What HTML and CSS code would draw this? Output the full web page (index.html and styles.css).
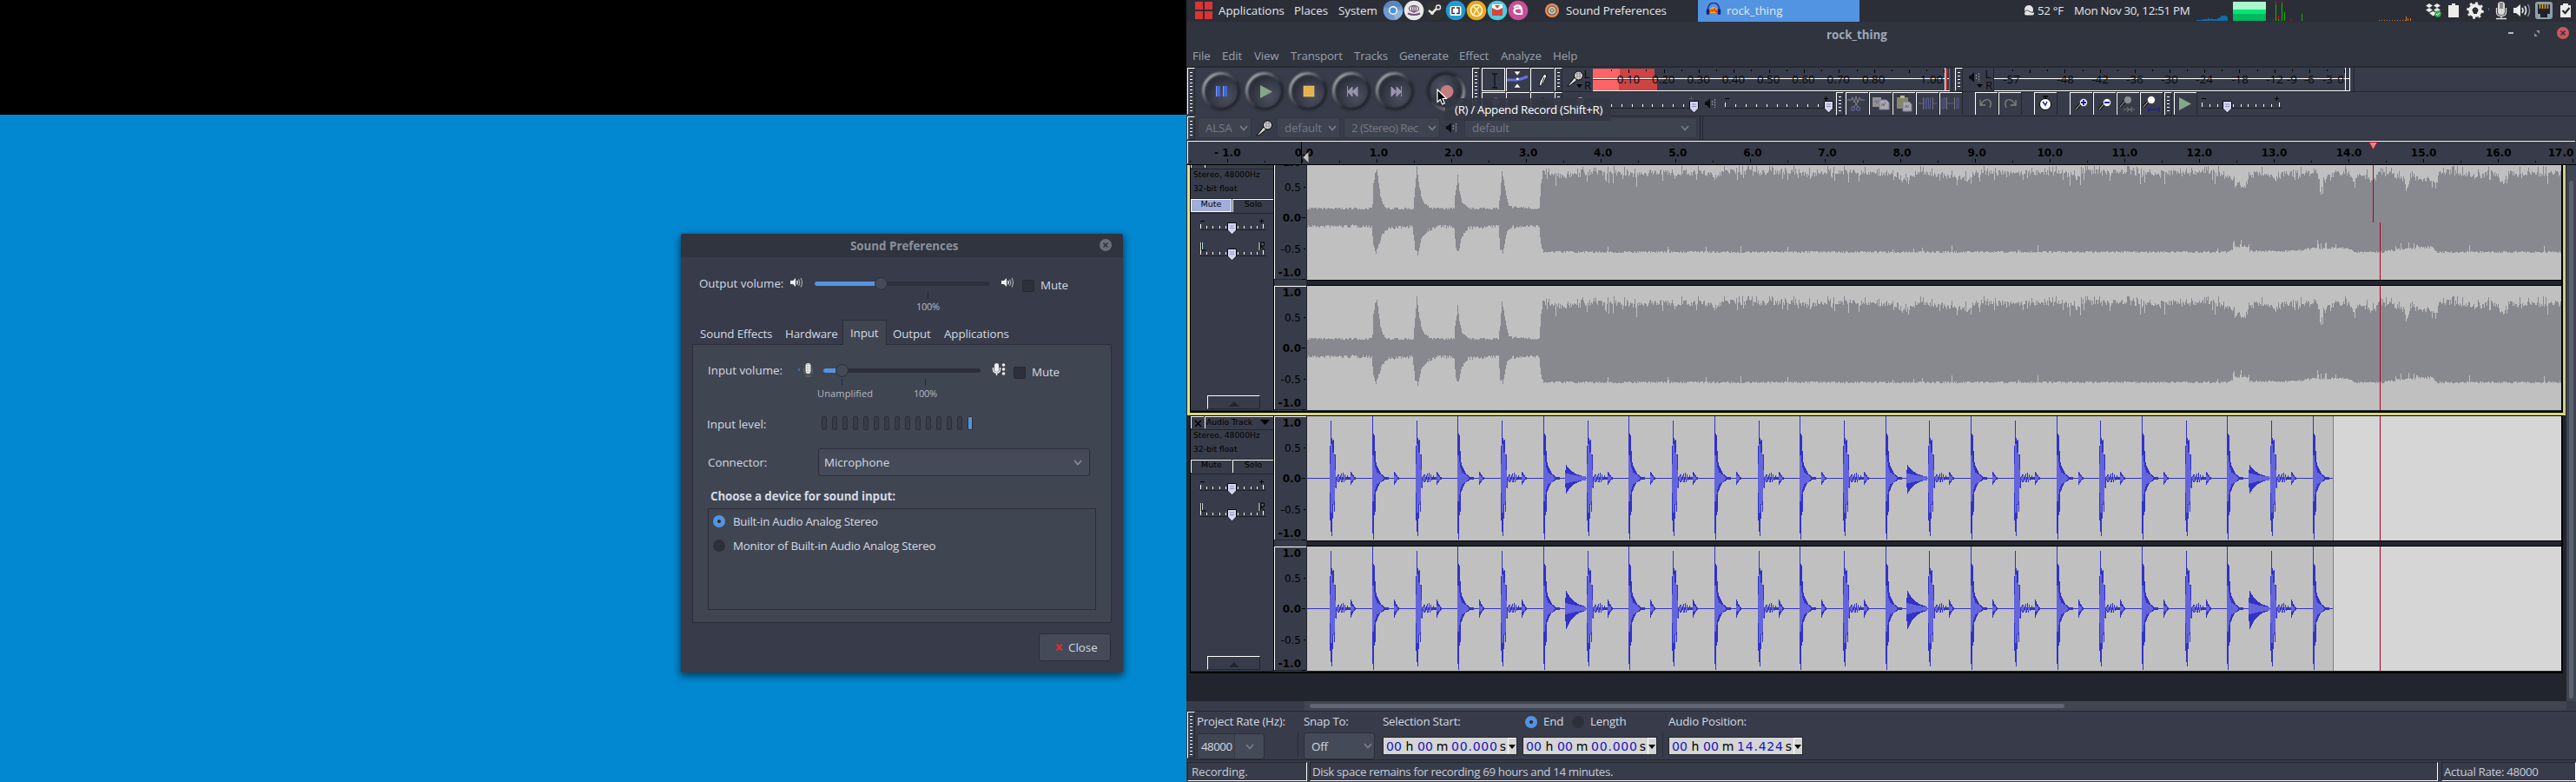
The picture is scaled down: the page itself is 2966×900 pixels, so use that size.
FILE: index.html
```html
<!DOCTYPE html>
<html lang="en">
<head>
<meta charset="utf-8">
<title>rock_thing</title>
<link rel="stylesheet" href="styles.css">
</head>
<body>
<div class="screens">
<section class="desktop">
  <div class="dead-area"></div>
  <div class="dialog">
    <header class="dialog-title"><span>Sound Preferences</span>
      <svg class="dialog-x" width="14" height="14" viewBox="0 0 14 14"><circle cx="7" cy="7" r="7" fill="#6b6f7a"/><path d="M4.5 4.5l5 5m0-5l-5 5" stroke="#2f343f" stroke-width="1.7"/></svg>
    </header>
    <div class="vol-row">
      <span class="vol-label out">Output volume:</span>
      <svg width="25" height="72" viewBox="905 296 25 72"><use href="#spk" x="910" y="319"/></svg>
      <svg width="217" height="72" viewBox="930 296 217 72">
        <rect x="938" y="324" width="201" height="5" rx="2.5" fill="#2d303b"/><rect x="938" y="324" width="76" height="5" rx="2.5" fill="#5294e2"/>
        <circle cx="1014.5" cy="326.500" r="7" fill="#444a58" stroke="#2b2e39"/><path d="M1068.500 336v8" stroke="#262934"/>
        <text class="mark" x="1055" y="357" textLength="27">100%</text></svg>
      <svg width="26" height="72" viewBox="1147 296 26 72"><use href="#spk" x="1153" y="319"/></svg>
      <i class="check"></i><span class="mute">Mute</span>
    </div>
    <nav class="tabs"><span class="t1">Sound Effects</span><span class="t2">Hardware</span><span class="t3">Input</span><span class="t4">Output</span><span class="t5">Applications</span></nav>
    <div class="page">
      <div class="vol-row in">
        <span class="vol-label inp">Input volume:</span>
        <svg width="33" height="64" viewBox="905 397 33 64"><path d="M920 424v3" stroke="#5294e2"/><rect x="927.500" y="418" width="6" height="12" rx="3" fill="#eee"/><path d="M929.500 419v10M931.500 419v10" stroke="#999" stroke-dasharray="1 1"/><path d="M925.500 424v3q0 4 5 4t5-4v-3M930.500 431v2M927 433h7" stroke="#5e605f" fill="none" stroke-width="1.300"/></svg>
        <svg width="200" height="64" viewBox="938 397 200 64">
          <rect x="948" y="424" width="181" height="5" rx="2.5" fill="#2d303b"/><rect x="948" y="424" width="20" height="5" rx="2.5" fill="#5294e2"/>
          <circle cx="969.500" cy="426.500" r="7" fill="#444a58" stroke="#2b2e39"/><path d="M969.500 436v8M1065.500 436v8" stroke="#262934"/>
          <text class="mark" x="941" y="457" textLength="64">Unamplified</text><text class="mark" x="1052" y="457" textLength="27">100%</text></svg>
        <svg width="25" height="64" viewBox="1138 397 25 64"><rect x="1145" y="418" width="5" height="10" rx="2.500" fill="#eee"/><path d="M1143.500 423v2q0 4 4 4t4-4v-2M1147.500 429v3" stroke="#eee" fill="none" stroke-width="1.500"/><g fill="#eee"><circle cx="1155.500" cy="420" r="1.800"/><circle cx="1155.500" cy="425" r="1.800"/><circle cx="1155.500" cy="430" r="1.800"/></g></svg>
        <i class="check"></i><span class="mute">Mute</span>
      </div>
      <div class="level-row"><span>Input level:</span><div class="level" id="level"></div></div>
      <div class="conn-row"><span>Connector:</span><div class="combo"><span>Microphone</span><svg width="10" height="7" viewBox="0 0 10 7"><path d="M1 1l4 4.500L9 1" fill="none" stroke="#8b8f9b" stroke-width="1.600"/></svg></div></div>
      <h2>Choose a device for sound input:</h2>
      <div class="devices">
        <div><i class="radio on"></i><span>Built-in Audio Analog Stereo</span></div>
        <div><i class="radio"></i><span>Monitor of Built-in Audio Analog Stereo</span></div>
      </div>
    </div>
    <div class="close-btn"><svg width="10" height="10" viewBox="0 0 10 10"><path d="M1.500 1.500l6.500 7m0-7l-6.500 7" stroke="#dc2f2f" stroke-width="2.400"/></svg><span>Close</span></div>
  </div>
</section>

<section class="app">
  <header class="panel">
    <svg class="logo" width="20" height="20" viewBox="0 0 20 20" fill="#da3434"><path d="M0 0h9v9H0zM11 0h9v9h-9zM0 11h9v9H0zM11 11h9v9h-9z"/></svg>
    <span class="p1">Applications</span><span class="p2">Places</span><span class="p3">System</span>
    <svg width="174" height="25" viewBox="1590 0 174 25">
      <circle cx="1604" cy="12" r="11.300" fill="#6d9bd0"/><path d="M1604 12h11.300a11.300 11.300 0 0 1-9 11z" fill="#8fb3dc"/><path d="M1593 9a11.300 11.300 0 0 1 21-1h-10z" fill="#5b86bd"/><circle cx="1604" cy="12" r="4.300" fill="#4a90e2" stroke="#fff" stroke-width="1.500"/>
      <circle cx="1628" cy="12" r="11.300" fill="#e8e8e8"/><g fill="none" stroke="#71517a" stroke-width="1.200"><ellipse cx="1628" cy="10" rx="5.500" ry="3.500"/><ellipse cx="1628" cy="10" rx="2.500" ry="3.500"/><path d="M1628 6v9"/></g><path d="M1621 15.500q7 3 14 0" stroke="#71517a" stroke-width="2.200" fill="none"/>
      <circle cx="1652" cy="12" r="11.300" fill="#323232"/><path d="M1645 12l4 3 5-5" stroke="#e8e8e8" stroke-width="2.500" fill="none"/><circle cx="1656" cy="8.500" r="2.500" fill="#323232" stroke="#e8e8e8" stroke-width="1.400"/><circle cx="1649" cy="15" r="2" fill="#e8e8e8"/>
      <circle cx="1676" cy="12" r="11.300" fill="#1f9bd6"/><rect x="1669.500" y="7" width="13" height="11" rx="2" fill="#fff"/><path d="M1675 9h-3v6.500h3M1677 9h3v6.500h-3" fill="none" stroke="#2f3136" stroke-width="1.500"/>
      <circle cx="1700" cy="12" r="11.300" fill="#eaa916"/><g fill="none" stroke="#fff" stroke-width="1.500"><circle cx="1700" cy="12" r="6.500"/><path d="M1697 8q4 3 6 8M1703 8q-4 3-6 8"/></g>
      <circle cx="1724" cy="12" r="11.300" fill="#4dcbe0"/><path d="M1718 5h12v6h-12z" fill="#fff"/><path d="M1718 9l6 3 6-3v9h-12z" fill="#d8433c"/><path d="M1721 6h6l-3 4z" fill="#d8433c"/>
      <circle cx="1748" cy="12" r="11.300" fill="#cb4f96"/><path d="M1743 8.500q4-3.500 7.500-1 2 2 1.500 8.500h-5q-3.500-.5-3.500-3.500t3.500-3h5" fill="none" stroke="#fff" stroke-width="2.200"/>
    </svg>
    <svg class="sndicon" width="16" height="16" viewBox="0 0 16 16"><circle cx="8" cy="8" r="8" fill="#f08c4a"/><circle cx="8" cy="8" r="5" fill="#e7cfae" stroke="#5f6670" stroke-width="1.400"/><circle cx="8" cy="8" r="2.200" fill="#f0a860" stroke="#5f6670"/></svg>
    <span class="p4">Sound Preferences</span>
    <div class="task"><svg width="18" height="16" viewBox="0 0 18 16"><path d="M2.500 10V7a6.300 6.500 0 0 1 13 0v3" fill="none" stroke="#1a2a9c" stroke-width="1.400"/><path d="M4.500 12q0-7 4.500-7t4.500 7z" fill="#ffb400"/><path d="M5 11l2-3 1 2 2-3 1 3 1-1 1 3" stroke="#e8301c" fill="none" stroke-width="1.300"/><rect x=".8" y="7" width="3.500" height="7" rx="1.700" fill="#151f86"/><rect x="13.700" y="7" width="3.500" height="7" rx="1.700" fill="#151f86"/></svg><span>rock_thing</span></div>
    <svg class="weather" width="13" height="13" viewBox="0 0 13 13" fill="#e4e4e4"><circle cx="6" cy="5" r="5"/><rect x="1" y="7.500" width="11" height="4" rx="2"/><path d="M2 6.500q3-2 5 1l4 1" stroke="#2b2e37" fill="none" stroke-width=".8"/></svg>
    <span class="p5">52 °F</span><span class="p6">Mon Nov 30, 12:51 PM</span>
    <svg width="440" height="25" viewBox="2526 0 440 25">
      <path d="M2529 24v-1h7v-1h6v-1h2v1h2v-1h1v1h6v-1h2v-1h2v-2h6v1h2v5z" fill="#0b6cab"/>
      <path d="M2571 2h38v9h-38z" fill="#aaf6cd"/><path d="M2571 11h38v5h-38z" fill="#00e676"/><path d="M2571 16h38v8h-38z" fill="#00b85e"/>
      <path d="M2620.500 24V5M2627.500 24V4M2630.500 24V14M2650.500 24v-8M2623.500 24v-4" stroke="#19b400"/><path d="M2620.500 5V1M2627.500 4V1M2623.500 22v-4M2617.500 24v-2M2637.500 24v-2" stroke="#d21414"/>
      <path d="M2739 23.500h38" stroke="#d9701d" stroke-dasharray="1 2"/><path d="M2770.500 24v-5M2772.500 24v-3M2775.500 24v-3" stroke="#d9701d"/>
      <path d="M2797 4l4 2.500-4 2.500-4-2.500zM2806 4l4 2.500-4 2.500-4-2.500zM2797 9l4 2.500-4 2.500-4-2.500zM2806 9l4 2.500-4 2.500-4-2.500zM2797 15l4.500-2 4.500 2-4.500 3.500z" fill="#ececec"/><circle cx="2807" cy="16" r="3.700" fill="#2fae46"/><path d="M2805 16l1.500 1.500 2.500-3" stroke="#fff" fill="none"/>
      <path d="M2823 4h4v2h4v14h-12V6h4z" fill="#ececec"/>
      <circle cx="2850" cy="12" r="8.300" fill="none" stroke="#ececec" stroke-width="3" stroke-dasharray="2.800 3.700"/><circle cx="2850" cy="12" r="5.500" fill="none" stroke="#ececec" stroke-width="4.500"/><path d="M2850 8l4 4h-2v4h-4v-4h-2z" fill="#2b2e37"/>
      <path d="M2865.500 9v3" stroke="#3d6ea8"/>
      <rect x="2876" y="2" width="8" height="15" rx="3.500" fill="#d8d8d8"/><path d="M2878 3h4v7h-4z" fill="#8b8b8b"/><path d="M2874.500 9v5q0 4.500 5.500 4.500t5.500-4.500V9M2880 18v3M2874 21.500h12" stroke="#e2e2e2" fill="none" stroke-width="1.300"/>
      <path d="M2894 9h3l5-4v14l-5-4h-3z" fill="#ececec"/><path d="M2904 9q2 3 0 6M2907 7q3 5 0 10" stroke="#ececec" fill="none" stroke-width="1.600"/><path d="M2910.500 5q4 7 0 14" stroke="#8a8d94" fill="none" stroke-width="1.500"/>
      <rect x="2919" y="2" width="20" height="20" rx="3" fill="#8d9fae"/><path d="M2922 5h14v11h-3v4h-8v-4h-3z" fill="#202226"/><path d="M2924.500 5v5M2927.500 5v5M2930.500 5v5M2933.500 5v5" stroke="#e2a81c" stroke-width="1.500"/>
      <path d="M2951 4h6v2h3v14h-12V6h3z" fill="#ececec"/><path d="M2950.500 12l3 3 5-6" stroke="#2b2e37" stroke-width="2.200" fill="none"/>
    </svg>
  </header>
  <div class="titlebar"><span>rock_thing</span>
    <svg width="90" height="27" viewBox="2876 25 90 27"><path d="M2888 37h6v2h-6z" fill="#b6bac2"/><path d="M2920 35h4v4zM2918 38v4h4z" fill="#8b8f99"/><circle cx="2951" cy="38" r="7" fill="#cc575d"/><path d="M2948.500 35.500l5 5m0-5l-5 5" stroke="#2f343f" stroke-width="1.700"/></svg>
  </div>
  <nav class="menu"><span>File</span><span>Edit</span><span>View</span><span>Transport</span><span>Tracks</span><span>Generate</span><span>Effect</span><span>Analyze</span><span>Help</span></nav>

  <div class="toolbars">
    <i class="grab tall first"></i>
    <svg class="transport" width="318" height="55" viewBox="1377 78 318 55">
      <use href="#btn" x="1406" y="105"/><use href="#btn" x="1456" y="105"/><use href="#btn" x="1506" y="105"/><use href="#btn" x="1556" y="105"/><use href="#btn" x="1606" y="105"/>
      <use href="#btn" transform="translate(1665 105) rotate(180)"/>
      <path d="M1400 99h5v12h-5zM1408 99h5v12h-5z" fill="#3f66e0"/><path d="M1400.500 99v12M1408.500 99v12" stroke="#7f9af2"/>
      <path d="M1451 98l14 7.500-14 7.500z" fill="#84a885"/>
      <rect x="1501" y="99" width="12" height="12" fill="#e5b14c" stroke="#f2cf85" stroke-width=".6"/>
      <path d="M1551.500 99v12M1557 100v11l-5.500-5.500zM1563 100v11l-6-5.500z" fill="#9a93ae" stroke="#9a93ae"/>
      <path d="M1613.500 99v12M1602 100v11l5.500-5.500zM1608 100v11l5.500-5.500z" fill="#9a93ae" stroke="#9a93ae"/>
      <circle cx="1666" cy="105.500" r="7.500" fill="#c77d80"/>
    </svg>
    <i class="grab tall"></i>
    <div class="tools">
      <i class="sel"><svg width="26" height="26"><path d="M11 6h2l1 1 1-1h2M11 22h2l1-1 1 1h2M14 7v14" stroke="#101218" fill="none" stroke-width="1.300"/></svg></i>
      <i><svg width="26" height="26"><path d="M8 3h8l-4 5zM8 22h8l-4-5z" fill="#fff" stroke="#111" stroke-width=".5"/><path d="M0 13h12q5-1 12-4" stroke="#686ee0" stroke-width="3" fill="none"/><rect x="11" y="10.500" width="2.500" height="2.500" fill="#fff"/></svg></i>
      <i><svg width="26" height="26"><path d="M9 21l1-6 5-9 3 2-4 9-5 4z" fill="#fff" stroke="#111"/><path d="M12 18l3-8" stroke="#111"/></svg></i>
      <i><svg width="26" height="26"><circle cx="15" cy="10" r="4.500" fill="#8b8d95"/><path d="M11 14l-6 7" stroke="#111" stroke-width="2"/></svg></i>
      <i><svg width="26" height="26"><path d="M5 13h15M8 9l-4 4 4 4M17 9l4 4-4 4" stroke="#111" stroke-width="1.500" fill="none"/></svg></i>
      <i><svg width="26" height="26"><path d="M13 5v16M6 8l14 10M20 8L6 18M5 13h16" stroke="#111" stroke-width="1.300"/></svg></i>
    </div>
    <div class="bars">
      <div class="bar">
        <i class="grab"></i>
        <svg width="452" height="28" viewBox="1799 78 452 28" id="recmeter"></svg>
        <i class="grab"></i>
        <svg width="451" height="28" viewBox="2260 78 451 28" id="playmeter"></svg>
      </div>
      <div class="bar">
        <i class="grab"></i>
        <svg width="315" height="28" viewBox="1799 106 315 28" id="mixer"></svg>
        <i class="grab"></i>
        <svg width="369" height="28" viewBox="2123 106 369 28" id="editbar"></svg>
        <i class="grab"></i>
        <svg width="140" height="28" viewBox="2501 106 140 28" id="playspeed"></svg>
      </div>
    </div>
  </div>
  <div class="device-bar">
    <i class="grab"></i>
    <div class="dcombo alsa"><span>ALSA</span><svg width="10" height="7"><use href="#chev"/></svg></div>
    <svg class="ic" width="29" height="27" viewBox="1441 134 29 27"><use href="#mic" x="1446" y="138"/></svg>
    <div class="dcombo d1"><span>default</span><svg width="10" height="7"><use href="#chev"/></svg></div>
    <div class="dcombo d2"><span>2 (Stereo) Rec</span><svg width="10" height="7"><use href="#chev"/></svg></div>
    <svg class="ic" width="28" height="27" viewBox="1658 134 28 27"><use href="#dspk" x="1665" y="141"/></svg>
    <div class="dcombo d3"><span>default</span><svg width="10" height="7"><use href="#chev"/></svg></div>
    <i class="barend"></i>
  </div>
  <svg class="ruler" width="1600" height="28" viewBox="1366 162 1600 28" id="ruler"></svg>

  <div class="workspace">
    <div class="tracks">
      <div class="track focused"><div class="track-in">
        <div class="tpanel">
          <div class="thead"><b class="tx"></b><span class="tname"></span></div>
          <div class="tinfo"><p>Stereo, 48000Hz</p><p>32-bit float</p></div>
          <div class="tms"><span class="on">Mute</span><span>Solo</span></div>
          <svg class="tsl" width="95" height="209"></svg>
          <div class="collapse"><svg width="12" height="6"><path d="M0 6L6 0l6 6z" fill="#22252d"/></svg></div>
        </div>
        <svg class="vr" width="38" height="294"></svg>
        <svg id="w1" width="1444" height="293"></svg>
      </div></div>
      <div class="track second"><div class="track-in">
        <div class="tpanel">
          <div class="thead"><b class="tx"><svg width="10" height="10"><path d="M1 1l7 7M8 1L1 8" stroke="#000" stroke-width="1.500"/></svg></b><span class="tname">Audio Track</span><svg class="tri" width="11" height="7"><path d="M0 0h11L5.500 6z"/></svg></div>
          <div class="tinfo"><p>Stereo, 48000Hz</p><p>32-bit float</p></div>
          <div class="tms"><span>Mute</span><span>Solo</span></div>
          <svg class="tsl" width="95" height="209"></svg>
          <div class="collapse"><svg width="12" height="6"><path d="M0 6L6 0l6 6z" fill="#22252d"/></svg></div>
        </div>
        <svg class="vr" width="38" height="294"></svg>
        <svg id="w2" width="1444" height="293"></svg>
      </div></div>
    </div>
    <div class="vscroll"><i></i></div>
  </div>
  <div class="hscroll"><div><i></i></div></div>

  <div class="selbar">
    <i class="grab"></i>
    <div class="col c1"><span class="lab">Project Rate (Hz):</span><div class="rate"><span>48000</span><b><svg width="10" height="7"><use href="#chev"/></svg></b></div></div>
    <i class="sep"></i>
    <div class="col c2"><span class="lab">Snap To:</span><div class="snap"><span>Off</span><svg width="10" height="7"><use href="#chev"/></svg></div></div>
    <div class="col c3"><span class="lab">Selection Start:</span><div class="time"><em>00</em><q>h</q><em>00</em><q>m</q><em>00.000</em><q>s</q><u></u></div></div>
    <div class="col c4"><span class="lab"><i class="radio on"></i>End<i class="radio two"></i>Length</span><div class="time"><em>00</em><q>h</q><em>00</em><q>m</q><em>00.000</em><q>s</q><u></u></div></div>
    <i class="sep s2"></i>
    <div class="col c5"><span class="lab">Audio Position:</span><div class="time"><em>00</em><q>h</q><em>00</em><q>m</q><em>14.424</em><q>s</q><u></u></div></div>
  </div>
  <footer class="status"><span class="st1">Recording.</span><span class="st2">Disk space remains for recording 69 hours and 14 minutes.</span><span class="st3">Actual Rate: 48000</span></footer>

  <div class="tooltip">(R) / Append Record (Shift+R)</div>
  <svg class="cursor" width="13" height="20" viewBox="0 0 13 20"><path d="M1 1v14.500l3.300-3 2.400 5.500 2.600-1.100L7 11.500h4.500z" fill="#000" stroke="#fff" stroke-width="1.200"/></svg>
</section>
</div>

<svg class="defs" width="0" height="0">
  <defs>
    <radialGradient id="bg1" cx=".65" cy=".65" r=".6"><stop offset="0" stop-color="#4b505e"/><stop offset=".55" stop-color="#3c404e"/><stop offset="1" stop-color="#2c2f3a"/></radialGradient>
    <linearGradient id="hl" x1="0" y1="0" x2="1" y2="1"><stop offset="0" stop-color="#fff" stop-opacity=".85"/><stop offset=".45" stop-color="#fff" stop-opacity=".1"/><stop offset=".6" stop-color="#000" stop-opacity=".2"/><stop offset="1" stop-color="#000" stop-opacity=".35"/></linearGradient>
    <filter id="soft"><feGaussianBlur stdDeviation="1"/></filter>
    <g id="btn"><circle r="23" fill="#2b2e38" opacity=".6" filter="url(#soft)"/><circle r="19" fill="url(#bg1)"/><circle r="20.500" fill="none" stroke="url(#hl)" stroke-width="3" filter="url(#soft)"/></g>
    <g id="spk"><path d="M0 4h3l3-3v10l-3-3H0z" fill="#eee"/><path d="M7.500 4q1.500 2 0 4.500" stroke="#eee" fill="none" stroke-width="1.300"/><path d="M9.500 2.500q2.500 4 0 7.500M12 1q3 5 0 10.500" stroke="#a8aab0" fill="none" stroke-width="1.200"/></g>
    <path id="chev" d="M1 1l4 4.500L9 1" fill="none" stroke="#7c808c" stroke-width="1.500"/>
    <g id="mic"><path d="M1 18l8-10 3 3-9 7z" fill="#d8d8d8" stroke="#000"/><circle cx="13.500" cy="6" r="5" fill="#ddd" stroke="#000"/><path d="M10 4h7M10 7h7M12 2v8M15 2v8" stroke="#777" stroke-width=".7"/></g>
    <g id="dspk"><path d="M0 4h2l4-4v12l-4-4H0z" fill="#0c0d12"/><path d="M8.500 3v6M11.500 1v10" stroke="#85888e" stroke-width="1.300" stroke-dasharray="2 1"/></g>
    <g id="thumb"><path d="M-5 .5H5v8.500L0 14l-5-5z" fill="#d4d4ee" stroke="#0a0a10"/><path d="M-2.500 4h5M-2.500 6.500h5" stroke="#8d8db8"/></g>
  </defs>
</svg>
<script src="app.js"></script>
</body>
</html>
```

FILE: styles.css
```css
* { box-sizing: border-box; }
body { margin: 0; width: 2966px; height: 900px; overflow: hidden; font: 13.33px/20px "Open Sans", "Noto Sans", sans-serif; color: #d3dae3; }
i, em, q { font-style: normal; }
q::before, q::after { content: none; }
svg { display: block; flex: none; }
.defs { position: absolute; }
.screens { display: flex; width: 2966px; height: 900px; }
span { white-space: nowrap; }

.desktop { position: relative; width: 1366px; height: 900px; background: #0288d1; flex: none; }
.dead-area { height: 132px; background: #000; }
.dialog { position: absolute; left: 784px; top: 269px; width: 509px; height: 505px; background: #383c4a; box-shadow: 0 3px 9px 1px rgba(0,0,0,.55); border-radius: 3px 3px 0 0; }
.dialog-title { display: flex; height: 27px; background: #2f343f; border-radius: 3px 3px 0 0; font-weight: bold; color: #8b919d; line-height: 28px; padding-left: 195px; }
.dialog-title span { width: 287px; }
.dialog-x { margin-top: 6px; }
.vol-row { display: flex; height: 72px; }
.vol-label { margin: 20px 0 0 21px; width: 100px; }
.mark { font-size: 11px; fill: #b4bac5; }
.check { width: 14px; height: 14px; margin: 26px 7px 0 4px; background: #2d303b; border: 1px solid #262933; border-radius: 2px; }
.mute { margin-top: 22px; letter-spacing: -.1px; }
.tabs { display: flex; height: 29px; padding-left: 22px; line-height: 32px; position: relative; z-index: 1; letter-spacing: -.1px; }
.tabs .t1 { width: 98px; }
.tabs .t2 { width: 66px; }
.tabs .t3 { width: 51px; height: 29px; background: #404552; border: 1px solid #2b2e39; border-bottom: 0; padding-left: 8px; line-height: 29px; }
.tabs .t4 { margin-left: 7px; width: 59px; }
.page { margin: -1px 13px 0; height: 321px; background: #404552; border: 1px solid #2b2e39; }
.vol-row.in { height: 64px; }
.vol-row.in .vol-label { margin: 19px 0 0 17px; width: 90px; }
.vol-row.in .check { margin-top: 25px; margin-left: 4px; }
.vol-row.in .mute { margin-top: 21px; }
.level-row { display: flex; height: 55px; padding: 17px 0 0 16px; }
.level-row span { width: 132px; }
.level { display: flex; gap: 6px; margin-top: 1px; }
.level i { width: 6px; height: 16px; border: 1px solid #2b2e39; border-radius: 2px; background: #383c4a; }
.level i:last-child { background: #5294e2; }
.conn-row { display: flex; height: 32px; padding-left: 17px; line-height: 33px; }
.conn-row > span { width: 127px; }
.combo { width: 313px; height: 32px; border: 1px solid #2b2e39; border-radius: 3px; background: #444a58; display: flex; justify-content: space-between; align-items: center; padding: 0 8px 0 6px; }
h2 { margin: 13px 0 4px 20px; font-size: 13.33px; line-height: 20px; letter-spacing: -.1px; }
.devices { margin-left: 17px; width: 447px; height: 117px; border: 1px solid #2b2e39; padding: 0 5px; letter-spacing: -.25px; }
.devices div { display: flex; align-items: center; height: 28px; gap: 9px; }
.radio { width: 14px; height: 14px; border-radius: 7px; background: #2d303b; flex: none; }
.radio.on { background: radial-gradient(circle, #2d303b 1.7px, #5294e2 2.4px); }
.close-btn { margin: 12px 0 0 412px; width: 83px; height: 32px; border: 1px solid #2b2e39; border-radius: 3px; background: #444a58; display: flex; align-items: center; gap: 5px; padding-left: 18px; }

.app { position: relative; width: 1600px; height: 900px; background: #383c4a; flex: none; display: flex; flex-direction: column; }
.panel { display: flex; height: 25px; background: #2b2e37; line-height: 25px; color: #e4e6ea; }
.logo { margin: 2px 7px 0 10px; }
.p1 { width: 87px; } .p2 { width: 51px; } .p3 { width: 49px; }
.sndicon { margin: 4px 8px 0 15px; }
.p4 { width: 152px; letter-spacing: -.1px; }
.task { width: 186px; height: 25px; background: #5294e2; display: flex; gap: 6px; padding-left: 9px; }
.task svg { margin-top: 3px; }
.weather { margin: 6px 3px 0 189px; }
.p5 { width: 42px; letter-spacing: -.3px; } .p6 { width: 138px; letter-spacing: -.3px; }
.titlebar { display: flex; height: 27px; background: #2f343f; line-height: 30px; font-weight: bold; color: #a0a8b6; padding-left: 737px; justify-content: space-between; }
.menu { display: grid; grid-template-columns: 34px 37px 42px 73px 52px 69px 48px 60px 60px; height: 26px; background: #2f343f; border-bottom: 2px solid #272a33; padding-left: 7px; line-height: 25px; color: #98a0ae; letter-spacing: -.15px; }

.toolbars { display: flex; height: 56px; padding-left: 1px; }
.grab { width: 9px; height: 27px; flex: none; border: 1px solid #fff; border-right-color: #23262e; border-bottom-color: #23262e; background: repeating-linear-gradient(#383c4a 0 3px, #fff 3px 4px) content-box; padding: 1px 2px 2px; }
.grab.tall { height: 54px; }
.grab.first { margin-right: 1px; }
.tools { display: grid; grid-template-columns: repeat(3, 27px); grid-template-rows: 27px 27px; gap: 1px; width: 86px; padding-left: 2px; flex: none; }
.tools i { border-top: 1px solid #fff; border-left: 1px solid #fff; }
.tools i.sel { border: 1px solid #fff; }
.bars { display: flex; flex-direction: column; }
.bar { display: flex; height: 28px; width: 1176px; border-bottom: 1px solid #23262e; }
.mt { font-size: 13.33px; fill: #08090c; text-anchor: middle; }
.device-bar { display: flex; height: 28px; padding: 0 0 0 1px; border-bottom: 1px solid #23262e; color: #757a86; }
.dcombo { height: 24px; margin-top: 1px; border: 1px solid #333744; border-radius: 3px; background: #3e4350; display: flex; justify-content: space-between; align-items: center; padding: 0 3px 0 8px; letter-spacing: -.15px; }
.alsa { width: 62px; margin-left: 3px; }
.d1 { width: 73px; }
.d2 { width: 111px; margin-left: 4px; padding-left: 8px; letter-spacing: -.6px; }
.d3 { width: 268px; padding-right: 8px; }
.barend { width: 4px; margin-left: 3px; border: 1px solid #23262e; border-width: 0 1px; }
.rl { font: bold 12px "DejaVu Sans", sans-serif; fill: #000; text-anchor: middle; }

.workspace { display: flex; height: 617px; background: #22252d; }
.tracks { width: 1589px; }
.track { overflow: hidden; }
.track-in { display: flex; }
.focused { margin-left: 1px; width: 1587px; height: 288px; border: 3px solid; border-color: #ffff80 #cfcf86 #d6d67e #e3e37c; border-top: 0; box-shadow: inset 1px 0 #000, inset -2px -2px #000; padding: 0 0 2px 1px; }
.focused .track-in { margin-top: -11px; height: 293px; }
.second { height: 297px; margin-left: 4px; width: 1581px; border: 0 solid #000; border-width: 1px 2px 2px 1px; }
.tpanel { width: 96px; height: 293px; border-right: 1px solid #000; background: #383c4a; font: 10px/16px "DejaVu Sans", sans-serif; color: #000; }
.thead { display: flex; height: 16px; border-bottom: 1px solid #23262e; line-height: 11px; }
.tx { width: 15px; height: 14px; border-top: 1px solid #fff; border-left: 1px solid #fff; padding: 3px; }
.tname { margin-left: 1px; width: 79px; height: 14px; border-top: 1px solid #fff; border-left: 1px solid #fff; padding-left: 1px; font-size: 9.200px; }
.tri { margin: 4px 0 0 -15px; }
.tinfo { height: 34px; border-bottom: 1px solid #23262e; font-size: 9.200px; padding-left: 3px; }
.tinfo p { margin: 0; height: 16px; line-height: 12px; }
.tms { display: flex; height: 17px; gap: 1px; border-bottom: 1px solid #23262e; padding-bottom: 1px; }
.tms span { width: 47px; height: 15px; border-top: 1px solid #fff; border-left: 1px solid #fff; text-align: center; line-height: 9px; font-size: 9.500px; }
.tms .on { background: #a3addb; border: 1px solid #fff; }
.collapse { margin-left: 19px; width: 61px; height: 16px; border: 1px solid #fff; border-right-color: #23262e; border-bottom-color: #23262e; padding: 6px 0 0 24px; }
.vr { background: #383c4a; }
.vl { font: 12px "DejaVu Sans", sans-serif; text-anchor: end; fill: #000; }
.vl.b { font-weight: bold; }
.vscroll { width: 11px; background: #404552; padding: 18px 3px 3px; }
.vscroll i { display: block; width: 5px; height: 596px; border-radius: 3px; background: #5c6270; }
.hscroll { height: 11px; padding: 0 11px 0 136px; }
.hscroll div { height: 11px; background: #404552; padding: 3px 6px; }
.hscroll i { display: block; width: 869px; height: 5px; border-radius: 3px; background: #5f6573; }

.selbar { display: flex; height: 57px; border-top: 1px solid #23262e; border-bottom: 1px solid #23262e; padding-left: 1px; letter-spacing: -.22px; }
.selbar .grab { height: 54px; }
.col { display: flex; flex-direction: column; flex: none; }
.lab { height: 22px; margin-bottom: 2px; line-height: 22px; display: flex; align-items: center; }
.c1 { margin-left: 2px; width: 116px; } .c2 { width: 91px; margin-left: 6px; } .c3 { width: 161px; } .c4 { width: 161px; } .c5 { margin-left: 6px; }
.c4 .lab .radio { margin: 2px 7px 0 3px; }
.c4 .lab .radio.two { margin: 2px 7px 0 10px; }
.rate { width: 78px; height: 30px; border: 1px solid #2b2e39; border-radius: 3px; background: #444a58; display: flex; align-items: center; margin-top: 1px; }
.rate span { width: 43px; padding-left: 4px; height: 28px; line-height: 29px; background: #404552; border-right: 1px solid #363a46; letter-spacing: -.5px; }
.rate b { padding-left: 12px; }
.snap { width: 82px; height: 31px; border: 1px solid #2b2e39; border-radius: 3px; background: #444a58; display: flex; align-items: center; justify-content: space-between; padding: 0 2px 0 8px; }
.sep { width: 1px; height: 28px; margin-top: 24px; background: #292c36; flex: none; }
.time { display: flex; width: 155px; height: 21px; margin-top: 5px; border: 1px solid #23262e; background: #d5d5d5; color: #000; font: 14px/20px "DejaVu Sans", sans-serif; letter-spacing: 0; padding-left: 3px; }
.time em { color: #1515c0; width: 18px; flex: none; }
.time q { width: 18px; text-align: center; flex: none; }
.time q:nth-of-type(2) { width: 21px; }
.time q:nth-of-type(3) { width: 11px; }
.time em:nth-of-type(3) { width: 54px; letter-spacing: .8px; }
.time u { position: relative; width: 9px; height: 19px; border-left: 1px solid #fff; border-top: 1px solid #fff; }
.time u::after { content: ""; position: absolute; left: 0; top: 7px; border: 4px solid transparent; border-top: 5px solid #000; border-bottom: 0; }
.status { display: flex; height: 25px; padding-top: 2px; line-height: 21px; color: #c6cdd8; letter-spacing: -.35px; }
.status span { height: 22px; border-top: 1px solid #23262e; border-left: 1px solid #23262e; border-bottom: 1px solid #fff; border-right: 1px solid #fff; padding-left: 2px; }
.status .st1 { width: 138px; margin-left: 1px; padding-left: 4px; letter-spacing: -.15px; }
.st2 { width: 1299px; margin-left: 3px; }
.st3 { width: 155px; margin-left: 4px; }

.tooltip { position: absolute; left: 298px; top: 113px; width: 191px; height: 26px; border-radius: 2px; background: rgba(52,56,68,.93); color: #fff; line-height: 26px; padding-left: 11px; white-space: nowrap; letter-spacing: -.3px; }
.cursor { position: absolute; left: 288px; top: 102px; }
```

FILE: app.js
```js
const $ = (s) => document.querySelector(s);
const rect = (x, y, w, h, f) => `<rect x="${x}" y="${y}" width="${w}" height="${h}" fill="${f}"/>`;
const text = (x, y, t, c, extra = "") => `<text class="${c}" x="${x}" y="${y}" ${extra}>${t}</text>`;

/* input level segments */
$("#level").innerHTML = "<i></i>".repeat(15);

/* slider with evenly spaced ticks */
function slider(x, w, n, y, thumb) {
  let s = rect(x, y, w + 4, 1, "#1f2229");
  for (let i = 0; i < n; i++) {
    const end = i === 0 || i === n - 1;
    s += rect(Math.round(x + i * w / (n - 1)), y - (end ? 6 : 4), 1, end ? 5 : 3, "#fff");
  }
  return s + `<use href="#thumb" x="${thumb + .5}" y="${y - 8}"/>`;
}

/* recording meter */
let m = `<use href="#mic" x="1804" y="81"/><path d="M1815 97h7l-3.500 4z"/>` +
  text(1827, 90, "L", "mt") + text(1828, 103, "R", "mt") +
  rect(1834, 79, 31, 11, "#ff6464") + rect(1865, 79, 40, 11, "#cc4444") +
  rect(1834, 92, 30, 12, "#ff6464") + rect(1864, 92, 44, 12, "#cc4444");
m += rect(1834, 90, 411, 1, "#fff") + rect(1834, 104, 411, 1, "#fff");
for (let i = 0; i < 20; i++) m += rect(Math.round(1855 + i * 20.18), 80, 1, i % 2 ? 4 : 2, "#000");
["0.10", "0.20", "0.30", "0.40", "0.50", "0.60", "0.70", "0.80"].forEach((t, i) => m += text(1875 + i * 40.3, 96, t, "mt"));
m += text(2224, 96, "1.00", "mt") + rect(2239, 78, 1, 27, "#fff") + rect(2240, 79, 2, 25, "#cc4444") + rect(2244, 79, 1, 25, "#cc4444") + rect(2247, 78, 1, 27, "#23262e");
$("#recmeter").innerHTML = m;

/* playback meter */
m = `<use href="#dspk" x="2267" y="83"/><path d="M2276 97h7l-3.500 4z"/>` + text(2289, 90, "L", "mt") + text(2290, 103, "R", "mt") +
  rect(2295, 78, 1, 27, "#23262e") + rect(2296, 90, 409, 1, "#fff") + rect(2296, 104, 409, 1, "#fff");
for (let i = 0; i < 20; i++) m += rect(Math.round(2699 - i * 20.1), 80, 1, i % 2 ? 2 : 4, "#000");
[[-57, 2316], [-48, 2378], [-42, 2418], [-36, 2458], [-30, 2498], [-24, 2538], [-18, 2579], [-12, 2619], [-9, 2639], [-6, 2659], [-3, 2680], [0, 2695]]
  .forEach(([t, x]) => m += text(x, 96, t, "mt"));
m += rect(2700, 78, 1, 27, "#fff") + rect(2705, 78, 1, 27, "#fff") + rect(2710, 78, 1, 27, "#23262e");
$("#playmeter").innerHTML = m;

/* mixer sliders */
$("#mixer").innerHTML = `<g opacity=".6"><use href="#mic" x="1806" y="110"/></g>` + slider(1831, 119, 11, 124, 1950) +
  `<use href="#dspk" x="1963" y="113"/>` + slider(1986, 119, 11, 124, 2105) + rect(1986, 113, 5, 1, "#000") +
  rect(1945, 113, 5, 1, "#555") + rect(1947, 111, 1, 5, "#555") + rect(2100, 113, 5, 1, "#000") + rect(2102, 111, 1, 5, "#000");

/* edit toolbar buttons */
const icons = {
  cut: `<path d="M2 9h5l1-3 2 6 2-7 2 7 2-6 1 3h5" stroke="#83837c" fill="none"/><path d="M9 18l6-8M15 18l-5-8" stroke="#85858c"/><circle cx="8.500" cy="19" r="2" fill="none" stroke="#5a5f98" stroke-width="1.300"/><circle cx="14.500" cy="19" r="2" fill="none" stroke="#5a5f98" stroke-width="1.300"/>`,
  copy: `<path d="M4 6h10v11H4z" fill="#93938f"/><path d="M12 9h8l3 3v8H12z" fill="#a8a8a8" stroke="#7d7da0"/><path d="M6 12l2-3 1 4 2-4M14 16l2-3 1 3 2-4" stroke="#686890" fill="none"/>`,
  paste: `<path d="M5 6h13v13H5z" fill="#85856a"/><path d="M9 4h5v3H9z" fill="#b8b888"/><path d="M12 11h7l3 3v8H12z" fill="#a8a8a8" stroke="#7d7da0"/><path d="M14 18l2-3 1 3 2-3" stroke="#686890" fill="none"/>`,
  trim: `<path d="M3 13h6M19 13h5" stroke="#60659a"/><path d="M8.500 6v14M19.500 6v14" stroke="#73736e"/><path d="M10.500 7v12h2V7h2v12h2V7h1" stroke="#575c92" fill="none"/>`,
  silence: `<path d="M3 7v12h2V7h2v12M9 13h9M20 19V7h2v12" stroke="#575c92" fill="none"/><path d="M8.500 6v14M17.500 6v14" stroke="#73736e"/>`,
  undo: `<path d="M6 9v6h6M7 14q4-7 9-5 4 3 1 9" fill="none" stroke="#83837c" stroke-width="1.300"/>`,
  redo: `<path d="M20 9v6h-6M19 14q-4-7-9-5-4 3-1 9" fill="none" stroke="#83837c" stroke-width="1.300"/>`,
  clock: `<circle cx="13" cy="14" r="6.500" fill="#fff" stroke="#000"/><path d="M10 5h6M13 5v3" stroke="#000" stroke-width="1.500"/><path d="M10 11l3 4 2-4" stroke="#2020a0" stroke-width="1.500" fill="none"/>`,
};
const lens = (fill, mark) => `<path d="M7 20l6-7" stroke="#000" stroke-width="3.400"/><path d="M7 20l6-7" stroke="#999" stroke-width="1.200"/><circle cx="16" cy="12" r="4.500" fill="${fill}" stroke="#222" stroke-width=".6"/>${mark}`;
icons.zin = lens("#fff", `<path d="M13 12h6M16 9v6" stroke="#1c1ca0" stroke-width="2"/>`);
icons.zout = lens("#fff", `<path d="M13 12h6" stroke="#1c1ca0" stroke-width="2"/>`);
icons.zsel = `<g transform="translate(-3 -3)" opacity=".75">${lens("#aaa", "")}</g><path d="M8 20h13M12 17l2 3-2 3M18 17l-2 3 2 3" stroke="#777" fill="none"/>`;
icons.zfit = `<g transform="translate(-3 -3)">${lens("#fff", "")}</g><path d="M9 20h13M10 17v6M22 17v6" stroke="#1c1ca0" fill="none" stroke-width="1.300"/>`;
icons.play = `<path d="M6 6l14 7.500L6 21z" fill="#84a885"/>`;
const btn = (x, k) => rect(x, 106, 26, 1, "#fff") + rect(x, 106, 1, 26, "#fff") + rect(x + 26, 106, 1, 26, "#23262e") + `<g transform="translate(${x} 106)">${icons[k]}</g>`;
$("#editbar").innerHTML = [[2125, "cut"], [2152, "copy"], [2179, "paste"], [2206, "trim"], [2233, "silence"], [2274, "undo"], [2301, "redo"], [2342, "clock"], [2383, "zin"], [2410, "zout"], [2437, "zsel"], [2464, "zfit"]].map((b) => btn(...b)).join("");
$("#playspeed").innerHTML = btn(2503, "play") + slider(2535, 89, 11, 124, 2564) + rect(2535, 113, 5, 1, "#000") + rect(2619, 113, 5, 1, "#000") + rect(2621, 111, 1, 5, "#000");

/* timeline ruler */
let r = rect(1367, 162, 1598, 1, "#fff") + rect(1366, 189, 1600, 1, "#000") + rect(1367, 162, 1, 26, "#fff");
for (let i = -1.5; i <= 17; i += .5) {
  const x = 1499.4 + i * 86.08, whole = i % 1 === 0;
  r += rect(Math.floor(x), whole ? 183 : 185, 1, whole ? 4 : 2, "#000");
  if (whole) r += text(i === 17 ? 2948.5 : x + (i > 9 || i < 0 ? 0 : 2), 180, i === -1 ? "- 1.0" : i.toFixed(1), "rl");
}
r += rect(1498, 163, 1, 26, "#000") + `<path d="M1506.500 175v12l-6-6z" fill="#c4c4c0"/>` +
  `<path d="M2727.500 163.500h10l-5 9z" fill="#cf8c8c" stroke="#b00020"/>`;
$("#ruler").innerHTML = r;

/* gain / pan sliders and amplitude scale, same for both tracks */
document.querySelectorAll(".tsl").forEach((e) => e.innerHTML =
  rect(11, 8, 5, 1, "#000") + rect(79, 8, 5, 1, "#000") + rect(81, 6, 1, 5, "#000") +
  slider(11, 72, 11, 18, 47) + slider(11, 72, 11, 48, 47) +
  `<path d="M12.500 33v9h5M80.500 42v-9h4v4h-4l5 5" stroke="#000" fill="none"/><path d="M11.500 33v9M79 33v9" stroke="#e9d7b0"/><path d="M13.500 33v8M82.500 35h1" stroke="#9fdcf0"/>`);
document.querySelectorAll(".vr").forEach((e) => {
  let s = "";
  [0, 150].forEach((o) => {
    s += rect(0, o, 37, 1, "#fff") + rect(0, o, 1, 143, "#fff") + rect(0, o + 142, 38, 1, "#23262e");
    s += text(31, o + 12, "1.0", "vl b") + text(31, o + 40.500, "0.5", "vl") + text(31, o + 76, "0.0", "vl b") + text(31, o + 111.500, "-0.5", "vl") + text(31, o + 139, "-1.0", "vl b");
    s += rect(34, o + 36, 2, 1, "#000") + rect(32, o + 71, 4, 1, "#000") + rect(34, o + 107, 2, 1, "#000") + rect(32, o + 142, 4, 1, "#000");
  });
  e.innerHTML = s + rect(37, 0, 1, 293, "#23262e");
});

/* waveforms: one column per pixel */
let seed = 7;
const rnd = () => (seed = (seed * 16807) % 2147483647) / 2147483647;
const lerp = (pts, x) => {
  for (let i = 1; i < pts.length; i++) if (x <= pts[i][0]) {
    const [a, b] = [pts[i - 1], pts[i]];
    return a[1] + (b[1] - a[1]) * (x - a[0]) / (b[0] - a[0]);
  }
  return pts[pts.length - 1][1];
};
const X0 = 1505, W = 1444;
const col = (x, y1, y2) => `M${x} ${y1}h1V${y2}h-1z`;

/* pixel distance from the zero line */
const TOP = [[1505, 10], [1579, 10], [1580, 16], [1581, 38], [1583, 50], [1585, 54], [1587, 40], [1589, 24], [1592, 15], [1596, 10], [1627, 10], [1628, 22], [1630, 46], [1631, 59], [1633, 40], [1636, 24], [1640, 15], [1648, 10], [1674, 10], [1675, 24], [1677, 38], [1678, 50], [1680, 30], [1683, 16], [1690, 10], [1725, 10], [1727, 26], [1729, 53], [1731, 42], [1734, 24], [1737, 12], [1772, 10], [1774, 38], [1776, 50], [1780, 50], [1800, 46], [1830, 50], [1870, 50], [1885, 47], [1895, 51], [1960, 50], [1975, 46], [1985, 51], [2070, 50], [2085, 46], [2095, 51], [2180, 50], [2188, 38], [2200, 46], [2210, 51], [2262, 44], [2275, 50], [2380, 50], [2390, 44], [2400, 51], [2500, 50], [2515, 49], [2530, 52], [2545, 50], [2560, 47], [2572, 40], [2583, 32], [2590, 45], [2595, 50], [2610, 50], [2620, 42], [2630, 50], [2645, 48], [2668, 50], [2671, 28], [2678, 44], [2690, 50], [2700, 50], [2710, 40], [2716, 50], [2730, 42], [2740, 50], [2755, 49], [2768, 42], [2770, 32], [2775, 45], [2790, 42], [2806, 40], [2808, 51], [2830, 50], [2850, 46], [2870, 50], [2882, 38], [2886, 50], [2900, 48], [2915, 49], [2935, 49], [2949, 51]];
const BOT = [[1505, 10], [1579, 10], [1581, 32], [1584, 41], [1588, 28], [1592, 18], [1600, 12], [1626, 10], [1629, 38], [1632, 42], [1636, 24], [1642, 16], [1655, 10], [1674, 11], [1676, 36], [1679, 40], [1683, 22], [1690, 12], [1725, 10], [1727, 36], [1730, 40], [1734, 18], [1740, 11], [1772, 10], [1774, 32], [1777, 40], [2565, 40], [2573, 35], [2588, 34], [2590, 39], [2640, 39], [2668, 35], [2672, 36], [2700, 35], [2712, 40], [2740, 40], [2755, 38], [2770, 36], [2800, 35], [2806, 40], [2949, 40]];
const wave = ["", ""];
for (let i = 0; i < W; i++) {
  const x = X0 + i, loud = x > 1775;
  let t = lerp(TOP, x), b = lerp(BOT, x);
  t += loud ? 1 + (rnd() - .5) * 7 + (rnd() < .16 ? 6 : 0) - (rnd() < .1 ? 11 * rnd() : 0) : (rnd() - .5) * 3;
  b += loud ? (rnd() - .5) * 2.500 - (rnd() < (b < 37 ? .2 : .025) ? 8 * rnd() : 0) : (rnd() - .4) * 4;
  t = Math.min(t, 59);
  [71, 221].forEach((c, k) => wave[k] += col(i, Math.round(c - t), Math.round(c + b)));
}
const gap = rect(0, 143, W, 1, "#000") + rect(0, 144, W, 5, "#22252d") + rect(0, 149, W, 1, "#000");
$("#w1").innerHTML = rect(0, 0, W, 293, "#c0c0c0") + `<path fill="#88888f" d="${wave[0]}${wave[1]}"/>` + gap +
  rect(1227, 11, 1, 66, "#b00020") + rect(1235, 77, 1, 66, "#b00020") + rect(1235, 150, 1, 143, "#b00020");

/* drum hits: amplitude above, below and rms per column */
const KICK = {
  u: [1, .72, .68, .43, .25, .19, .17, .14, .11, .08, .06, .05, .04, .03, .02, .02, .015, .015, .01],
  d: [.88, .98, .59, .53, .21, .18, .14, .11, .09, .06, .05, .04, .04, .03, .02, .02, .015, .015, .01],
  r: [.37, .36, .25, .17, .12, .09, .08, .07, .06, .05, .04, .03, .02, .01],
};
const SNARE = {
  u: [.52, .93, .65, .6, .62, .38, .38, .02],
  d: [.67, .86, .92, .64, .42, .53, .14, .16],
  r: [.22, .55, .55, .4, .42, .37, .12, .01],
};
const TAIL = { u: [.1, .08, .05, .04, .02, .01], d: [.1, .07, .05, .03, .02, .01], r: [.04, .04, .03, .02, .01, 0] };
const TOM = { u: [], d: [], r: [] };
for (let i = 0; i < 24; i++) { TOM.u.push(i ? .23 * Math.exp(-i / 10) : .12); TOM.d.push(i ? .27 * Math.exp(-i / 9) : .14); TOM.r.push(.08 * Math.exp(-i / 18)); }
const BUZZ = {
  u: [.03, .05, .06, .01, .04, .07, .01, .08, .02, .06, .01, .02, .04, .01, .02, .01],
  d: [.03, .05, .06, .04, .01, .06, .05, .01, .06, .02, .03, .01, .02, .01, .02, .01],
  r: [.02, .03, .04, .01, .01, .04, .01, .01, .02, .02, .01, .01, .01, .01, .01, .01],
};

const END = 2686 - X0;
function blue(center, gain) {
  const u = new Float32Array(END), d = new Float32Array(END), q = new Float32Array(END);
  const put = (x, p, g = 1) => p.u.forEach((v, i) => {
    const k = Math.round(x - X0) + i;
    if (k < 0 || k >= END) return;
    u[k] = Math.max(u[k], v * g); d[k] = Math.max(d[k], p.d[i] * g); q[k] = Math.max(q[k], p.r[i] * Math.min(g, 1.1));
  });
  for (let i = 0; i < 12; i++) {
    const s = 1531.3 + i * 98.44, k = 1580 + i * 98.44;
    put(s, SNARE); put(s + 8, BUZZ); put(s + 24, TAIL, gain);
    put(k, KICK);
    if (![2, 6, 10].includes(i)) put(k + 25, TAIL, gain);
  }
  [1801.5, 2195.3, 2588.6].forEach((x) => put(x, TOM, gain === 1 ? 1 : 1.35));
  let dark = "", light = "";
  for (let i = 0; i < END; i++) {
    dark += col(i, Math.round(center - u[i] * 71.5), Math.round(center + 1 + d[i] * 71.5));
    if (q[i] > .012) light += col(i, Math.round(center - q[i] * 71.5), Math.round(center + 1 + q[i] * 71.5));
  }
  return `<path fill="#3232c8" d="${dark}"/><path fill="#6464dc" d="${light}"/>`;
}
$("#w2").innerHTML = rect(0, 0, W, 293, "#d6d6d6") + rect(0, 0, END, 293, "#c0c0c0") + rect(END, 0, 1, 293, "#808080") +
  blue(71, 1) + blue(221, 1.4) + rect(1235, 0, 1, 293, "#b00020") + gap;
```
